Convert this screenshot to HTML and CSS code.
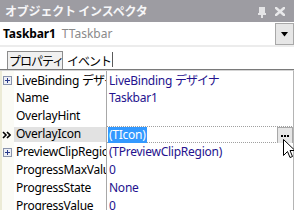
FILE: index.html
```html
<!DOCTYPE html>
<html lang="ja">
<head>
<meta charset="utf-8">
<link rel="stylesheet" href="styles.css">
</head>
<body>
<div class="inspector">
  <div class="titlebar">
    <span class="title">オブジェクト インスペクタ</span>
    <span class="tb-icons">
      <svg class="pin" width="8" height="11" viewBox="0 0 8 11"><rect x="1" y="0" width="6" height="6" fill="#e4e4e6"/><rect x="0" y="6" width="8" height="2" fill="#e4e4e6"/><rect x="3" y="8" width="2" height="3" fill="#e4e4e6"/></svg>
      <svg class="close" width="10" height="9" viewBox="0 0 10 9"><path d="M1 1 L9 8 M9 1 L1 8" stroke="#e8e8ea" stroke-width="2.6" stroke-linecap="square"/></svg>
    </span>
  </div>
  <div class="combo">
    <span class="obj-name">Taskbar1</span>
    <span class="obj-type">TTaskbar</span>
    <span class="combo-btn"><svg width="7" height="5" viewBox="0 0 7 5"><path d="M0 0 H7 L3.5 4.5 Z" fill="#000"/></svg></span>
  </div>
  <div class="gap"></div>
  <div class="tabs">
    <span class="tab active">プロパティ</span>
    <span class="tab">イベント</span>
    <span class="tab-sep"></span>
  </div>
  <div class="grid">
    <div class="row">
      <div class="gutter"><svg class="plus" width="9" height="9" viewBox="0 0 9 9"><rect x="0.5" y="0.5" width="8" height="8" fill="#eef0f6" stroke="#8a94ac"/><path d="M2 4.5 H7 M4.5 2 V7" stroke="#2a3a8a"/></svg></div>
      <div class="name">LiveBinding <span class="jp">デザイナ</span></div>
      <div class="value">LiveBinding <span class="jp">デザイナ</span></div>
    </div>
    <div class="row">
      <div class="gutter"></div>
      <div class="name">Name</div>
      <div class="value">Taskbar1</div>
    </div>
    <div class="row">
      <div class="gutter"></div>
      <div class="name">OverlayHint</div>
      <div class="value"></div>
    </div>
    <div class="row selected">
      <div class="gutter"><svg class="marker" width="9" height="8" viewBox="0 0 9 8"><path d="M1 1 L4 4 L1 7 M5 1 L8 4 L5 7" stroke="#000" stroke-width="1.6" fill="none"/></svg></div>
      <div class="name">OverlayIcon</div>
      <div class="value"><span class="sel-text">(TIcon)</span><span class="ellipsis-btn"><svg width="8" height="2" viewBox="0 0 8 2"><rect x="0" y="0" width="2" height="2" fill="#000"/><rect x="3" y="0" width="2" height="2" fill="#000"/><rect x="6" y="0" width="2" height="2" fill="#000"/></svg></span></div>
    </div>
    <div class="row">
      <div class="gutter"><svg class="plus" width="9" height="9" viewBox="0 0 9 9"><rect x="0.5" y="0.5" width="8" height="8" fill="#eef0f6" stroke="#8a94ac"/><path d="M2 4.5 H7 M4.5 2 V7" stroke="#2a3a8a"/></svg></div>
      <div class="name">PreviewClipRegion</div>
      <div class="value">(TPreviewClipRegion)</div>
    </div>
    <div class="row">
      <div class="gutter"></div>
      <div class="name">ProgressMaxValue</div>
      <div class="value">0</div>
    </div>
    <div class="row">
      <div class="gutter"></div>
      <div class="name">ProgressState</div>
      <div class="value">None</div>
    </div>
    <div class="row">
      <div class="gutter"></div>
      <div class="name">ProgressValue</div>
      <div class="value">0</div>
    </div>
  </div>
  <svg class="cursor" width="13" height="20" viewBox="0 0 13 20"><path d="M0.5 0.5 V16.5 L4.5 12.5 L7 18.5 L9.5 17.5 L7 11.5 H12 Z" fill="#fff" stroke="#000" stroke-width="1" stroke-linejoin="miter"/></svg>
</div>
</body>
</html>
```

FILE: styles.css
```css
html, body {
  margin: 0;
  padding: 0;
  background: #ffffff;
}

body {
  font-family: "Noto Sans", "Noto Sans CJK JP", sans-serif;
  font-size: 12px;
  color: #000;
}

.inspector {
  position: relative;
  width: 294px;
  height: 210px;
  overflow: hidden;
  display: flex;
  flex-direction: column;
}

.titlebar {
  height: 22px;
  flex: none;
  background: #9d9ca2;
  display: flex;
  align-items: center;
  padding-left: 5px;
  padding-right: 9px;
}

.title {
  color: #f6f6f8;
  font-family: "Noto Sans CJK JP", sans-serif;
  font-weight: bold;
  font-size: 12px;
  letter-spacing: -0.2px;
  line-height: 22px;
}

.tb-icons {
  margin-left: auto;
  display: flex;
  align-items: center;
  gap: 9px;
}

.pin {
  display: block;
  margin-top: 2px;
}

.close {
  display: block;
}

.combo {
  height: 23px;
  flex: none;
  background: #fff;
  display: flex;
  align-items: center;
  padding-left: 3px;
}

.obj-name {
  font-weight: bold;
  line-height: 22px;
  letter-spacing: -0.1px;
}

.obj-type {
  color: #8a8a8a;
  margin-left: 6px;
  line-height: 22px;
}

.combo-btn {
  margin-left: auto;
  align-self: flex-end;
  width: 19px;
  height: 22px;
  box-sizing: border-box;
  background: #e6e6e6;
  border: 1px solid #a8a8a8;
  display: flex;
  align-items: center;
  justify-content: center;
}

.combo-btn svg {
  display: block;
}

.gap {
  height: 2px;
  flex: none;
  background: #ececec;
}

.tabs {
  height: 23px;
  flex: none;
  box-sizing: border-box;
  background: #fff;
  border-bottom: 1px solid #7a7a7a;
  display: flex;
  align-items: flex-end;
  padding-left: 7px;
}

.tab {
  font-family: "Noto Sans CJK JP", sans-serif;
  font-size: 12px;
  letter-spacing: -1px;
  line-height: 17px;
  padding: 0 0 0 4px;
  white-space: nowrap;
}

.tab.active {
  background: #f0f0f0;
  border: 1px solid #8c8c8c;
  border-bottom: none;
  height: 18px;
  box-sizing: border-box;
  width: 56px;
  padding-left: 1px;
  overflow: visible;
}

.tab-sep {
  width: 1px;
  height: 15px;
  background: #5a5a5a;
  margin-left: 1px;
  margin-bottom: 2px;
}

.grid {
  border-top: 1px solid #d4d4d4;
  border-right: 1px solid #b4b4b4;
  flex: 1;
}

.row {
  display: grid;
  grid-template-columns: 14px 93px 186px;
  height: 18px;
  line-height: 18px;
}

.gutter {
  position: relative;
  background: #fbfbf6;
  border-left: 2px solid #ecebd6;
  box-sizing: border-box;
}

.plus {
  position: absolute;
  left: 1px;
  top: 5px;
}

.marker {
  position: absolute;
  left: 0px;
  top: 6px;
}

.name {
  padding-left: 2px;
  border-right: 1px solid #a8a8a8;
  white-space: nowrap;
  overflow: hidden;
  letter-spacing: -0.25px;
}

.value {
  padding-left: 2px;
  color: #24128e;
  white-space: nowrap;
  overflow: hidden;
  position: relative;
  letter-spacing: -0.25px;
}

.jp {
  font-family: "Noto Sans CJK JP", sans-serif;
  letter-spacing: -1px;
}

.row.selected .name {
  background: linear-gradient(#fff 0, #fff 2px, #e2e2e2 2px, #e2e2e2 17px, #fff 17px);
}

.row.selected .value {
  padding-left: 1px;
  box-sizing: border-box;
  height: 18px;
  background:
    linear-gradient(90deg, #a0a0a0 50%, transparent 50%) 0 1px / 2px 1px repeat-x,
    linear-gradient(90deg, #a0a0a0 50%, transparent 50%) 0 17px / 2px 1px repeat-x,
    #fff;
}

.sel-text {
  display: inline-block;
  background: #3399ff;
  color: #fff;
  line-height: 16px;
  margin-top: 2px;
  padding: 0 1px;
  vertical-align: top;
}

.ellipsis-btn {
  position: absolute;
  right: 0;
  top: 2px;
  width: 16px;
  height: 17px;
  box-sizing: border-box;
  background: #e6e6e6;
  border: 1px solid #a8a8a8;
  display: flex;
  align-items: center;
  justify-content: center;
}

.ellipsis-btn svg {
  display: block;
}

.cursor {
  position: absolute;
  left: 283px;
  top: 139px;
}
```
